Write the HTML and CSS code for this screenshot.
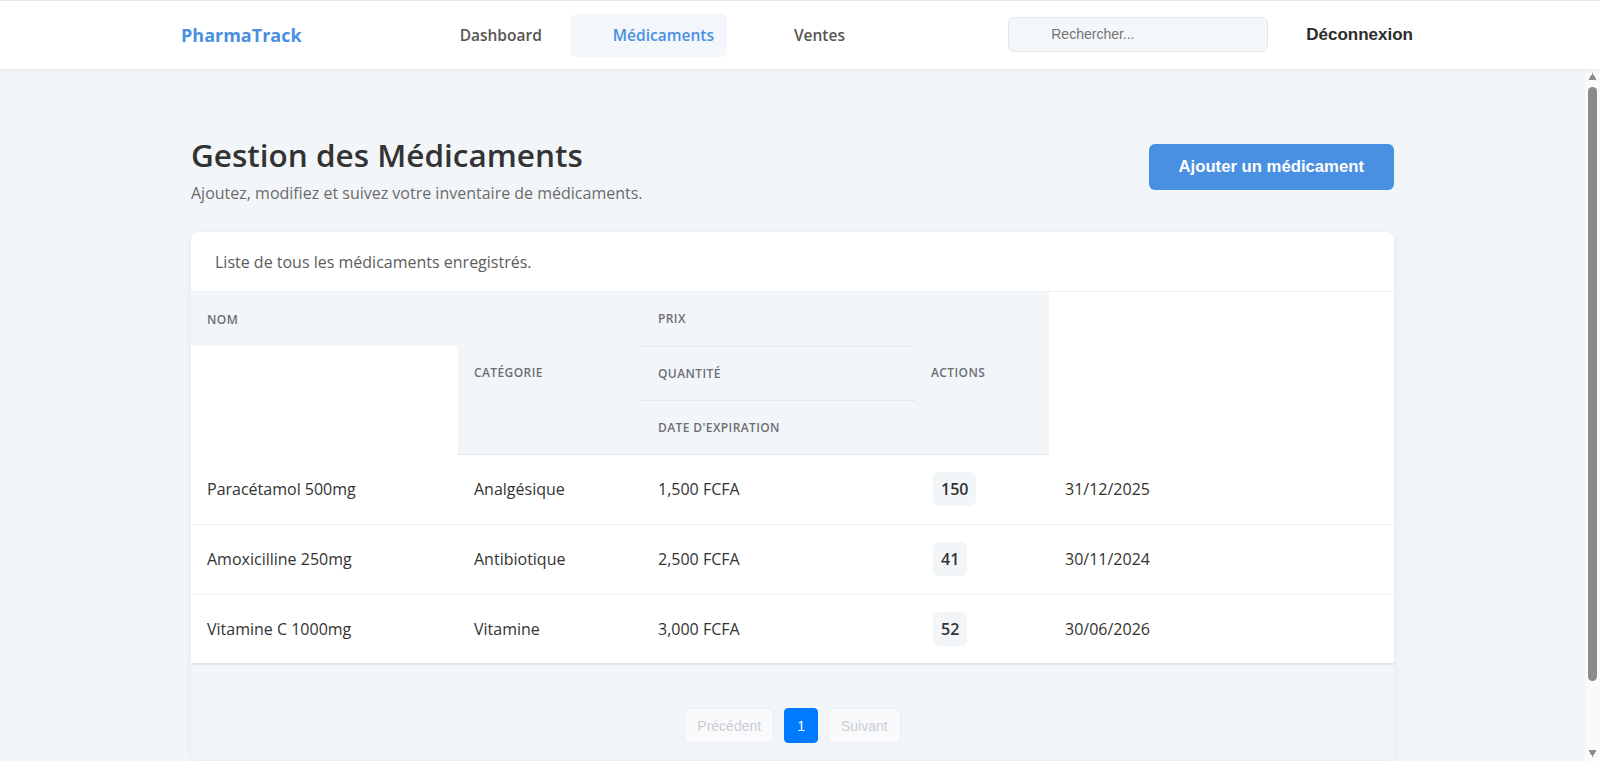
FILE: index.html
```html
<!DOCTYPE html>
<html lang="fr">
<head>
<meta charset="utf-8">
<title>PharmaTrack - Médicaments</title>
<link rel="stylesheet" href="styles.css">
</head>
<body>
<header class="topbar">
  <div class="topbar-inner">
    <a class="brand" href="#">PharmaTrack</a>
    <nav class="nav">
      <a class="nav-link" href="#">Dashboard</a>
      <a class="nav-link active" href="#">Médicaments</a>
      <a class="nav-link nav-link-wide" href="#">Ventes</a>
    </nav>
    <div class="topbar-right">
      <input class="search" type="text" placeholder="Rechercher...">
      <button class="logout" type="button">Déconnexion</button>
    </div>
  </div>
</header>
<div class="viewport">
  <main class="main">
    <div class="container">
      <div class="page-head">
        <div class="page-title">
          <h1>Gestion des Médicaments</h1>
          <p class="subtitle">Ajoutez, modifiez et suivez votre inventaire de médicaments.</p>
        </div>
        <button class="btn-primary" type="button">Ajouter un médicament</button>
      </div>
      <section class="card">
        <div class="card-head">Liste de tous les médicaments enregistrés.</div>
        <table class="table">
          <colgroup>
            <col class="c-name">
            <col class="c-cat">
            <col class="c-price">
            <col class="c-qty">
            <col class="c-date">
          </colgroup>
          <thead>
            <tr>
              <th class="th">Nom</th>
              <th class="th th-line" rowspan="3">Catégorie</th>
              <th class="th th-line">Prix</th>
              <th class="th th-line" rowspan="3">Actions</th>
              <td class="th-empty" rowspan="3"></td>
            </tr>
            <tr>
              <td class="th-empty" rowspan="2"></td>
              <th class="th th-line">Quantité</th>
            </tr>
            <tr>
              <th class="th th-line">Date d'expiration</th>
            </tr>
          </thead>
          <tbody>
            <tr>
              <td>Paracétamol 500mg</td>
              <td>Analgésique</td>
              <td>1,500 FCFA</td>
              <td><span class="badge">150</span></td>
              <td>31/12/2025</td>
            </tr>
            <tr>
              <td>Amoxicilline 250mg</td>
              <td>Antibiotique</td>
              <td>2,500 FCFA</td>
              <td><span class="badge">41</span></td>
              <td>30/11/2024</td>
            </tr>
            <tr>
              <td>Vitamine C 1000mg</td>
              <td>Vitamine</td>
              <td>3,000 FCFA</td>
              <td><span class="badge">52</span></td>
              <td>30/06/2026</td>
            </tr>
          </tbody>
        </table>
        <div class="card-foot">
          <div class="pagination">
            <button class="page-btn disabled" type="button">Précédent</button>
            <button class="page-btn current" type="button">1</button>
            <button class="page-btn disabled" type="button">Suivant</button>
          </div>
        </div>
      </section>
    </div>
  </main>
  <div class="scrollbar" aria-hidden="true">
    <span class="sb-arrow sb-up"></span>
    <span class="sb-track"><span class="sb-thumb"></span></span>
    <span class="sb-arrow sb-down"></span>
  </div>
</div>
</body>
</html>
```
FILE: styles.css
```css
* { box-sizing: border-box; }

html, body {
  margin: 0;
  height: 100%;
}

body {
  font-family: "Open Sans", "Noto Sans", sans-serif;
  color: #333;
  background: #f3f6f9;
  display: flex;
  flex-direction: column;
  overflow: hidden;
}

/* Header */
.topbar {
  background: #fff;
  height: 69px;
  flex: 0 0 auto;
  border-top: 1px solid #e6ebe6;
  box-shadow: 0 2px 4px rgba(0, 0, 0, 0.06);
  position: relative;
  z-index: 2;
}

.topbar-inner {
  max-width: 1240px;
  margin: 0 auto;
  height: 100%;
  display: flex;
  align-items: center;
}

.brand {
  font-size: 18px;
  font-weight: 700;
  color: #4a90e2;
  text-decoration: none;
  margin-left: 1px;
}

.nav {
  display: flex;
  gap: 16px;
  margin-left: 116px;
}

.nav-link {
  font-size: 15.5px;
  font-weight: 600;
  color: #555;
  text-decoration: none;
  padding: 11px 13px 11px 42px;
  border-radius: 6px;
  line-height: 21px;
}

.nav-link-wide {
  margin-left: 9px;
}

.nav-link.active {
  color: #4a90e2;
  background: #f3f6fa;
}

.topbar-right {
  margin-left: auto;
  display: flex;
  align-items: center;
}

.search {
  width: 260px;
  height: 35px;
  margin-top: -2px;
  margin-left: 2px;
  border: 1px solid #e3e7ec;
  border-radius: 6px;
  background: #f4f7fa;
  padding: 0 12px 0 42px;
  font-family: "Liberation Sans", Arial, sans-serif;
  font-size: 14px;
  color: #333;
  outline: none;
}

.search::placeholder {
  color: #737373;
}

.logout {
  margin-left: 38px;
  border: 0;
  background: transparent;
  font-family: "Liberation Sans", Arial, sans-serif;
  font-size: 17px;
  font-weight: 700;
  color: #2b2b2b;
  padding: 8px 7px 8px 0;
}

/* Main area + scrollbar */
.viewport {
  flex: 1 1 auto;
  min-height: 0;
  display: flex;
}

.main {
  flex: 1 1 auto;
  min-width: 0;
  overflow: hidden;
}

.scrollbar {
  flex: 0 0 15px;
  background: #fafafa;
  display: flex;
  flex-direction: column;
}

.sb-arrow {
  flex: 0 0 15px;
}

.sb-up {
  background: conic-gradient(from 150deg at 50% 0%, #8e8e8e 60deg, transparent 0) no-repeat center / 9px 7px;
}

.sb-down {
  background: conic-gradient(from -30deg at 50% 100%, #8e8e8e 60deg, transparent 0) no-repeat center / 9px 7px;
}

.sb-track {
  flex: 1 1 auto;
  padding: 3px 3px 0;
}

.sb-thumb {
  display: block;
  height: 594px;
  width: 9px;
  background: #8b8b8b;
  border-radius: 5px;
}

.container {
  max-width: 1203px;
  margin: 0 auto;
  padding: 66px 0 80px;
}

/* Page head */
.page-head {
  display: flex;
  justify-content: space-between;
  align-items: flex-start;
}

.page-title h1 {
  margin: 0;
  font-size: 31.5px;
  font-weight: 600;
  line-height: 40px;
  color: #333;
}

.subtitle {
  margin: 7px 0 0;
  font-size: 16px;
  color: #6b6b6b;
  line-height: 22px;
}

.btn-primary {
  margin-top: 9px;
  background: #4a90e2;
  color: #fff;
  border: 0;
  border-radius: 6px;
  font-family: "Liberation Sans", Arial, sans-serif;
  font-size: 16.7px;
  font-weight: 700;
  height: 46px;
  padding: 0 30px;
}

/* Card */
.card {
  margin-top: 28px;
  background: #fff;
  border-radius: 8px;
  box-shadow: 0 2px 8px rgba(0, 0, 0, 0.06);
  overflow: hidden;
}

.card-head {
  padding: 19px 24px 18px;
  font-size: 16px;
  line-height: 22px;
  color: #5c5c5c;
  border-bottom: 1px solid #eef1f4;
}

.table {
  width: 100%;
  border-collapse: collapse;
  table-layout: fixed;
}

.c-name { width: 267px; }
.c-cat { width: 184px; }
.c-price { width: 273px; }
.c-qty { width: 134px; }

.th {
  background: #f3f6f9;
  text-align: left;
  font-size: 12px;
  font-weight: 600;
  letter-spacing: 0.4px;
  text-transform: uppercase;
  color: #6b6f74;
  padding: 16px 16px;
  line-height: 21px;
  height: 54px;
  vertical-align: middle;
}

.th-line {
  border-bottom: 1px solid #e4e8ec;
}

.th-empty {
  background: #fff;
  padding: 0;
}

tbody td {
  font-size: 16px;
  color: #333;
  padding: 0 16px;
  height: 70px;
  border-bottom: 1px solid #eef1f4;
  vertical-align: middle;
}

tbody td:nth-child(4) {
  padding-left: 18px;
}

tbody tr:last-child td {
  border-bottom: 2px solid #e2e6ea;
}

.badge {
  display: inline-block;
  background: #f3f6f9;
  border-radius: 6px;
  padding: 6px 8px;
  font-weight: 600;
  line-height: 22px;
}

/* Footer / pagination */
.card-foot {
  background: #f3f6f9;
  padding: 43px 0 17px;
}

.pagination {
  display: flex;
  justify-content: center;
  gap: 10px;
}

.page-btn {
  font-family: "Liberation Sans", Arial, sans-serif;
  font-size: 14px;
  height: 35px;
  border-radius: 4px;
  border: 1px solid #eceef1;
  padding: 0 12px;
}

.page-btn.disabled {
  background: #f9fafb;
  color: #c9cdd2;
}

.page-btn.current {
  background: #007bff;
  border-color: #007bff;
  color: #fff;
  padding: 0 12px;
}
```
